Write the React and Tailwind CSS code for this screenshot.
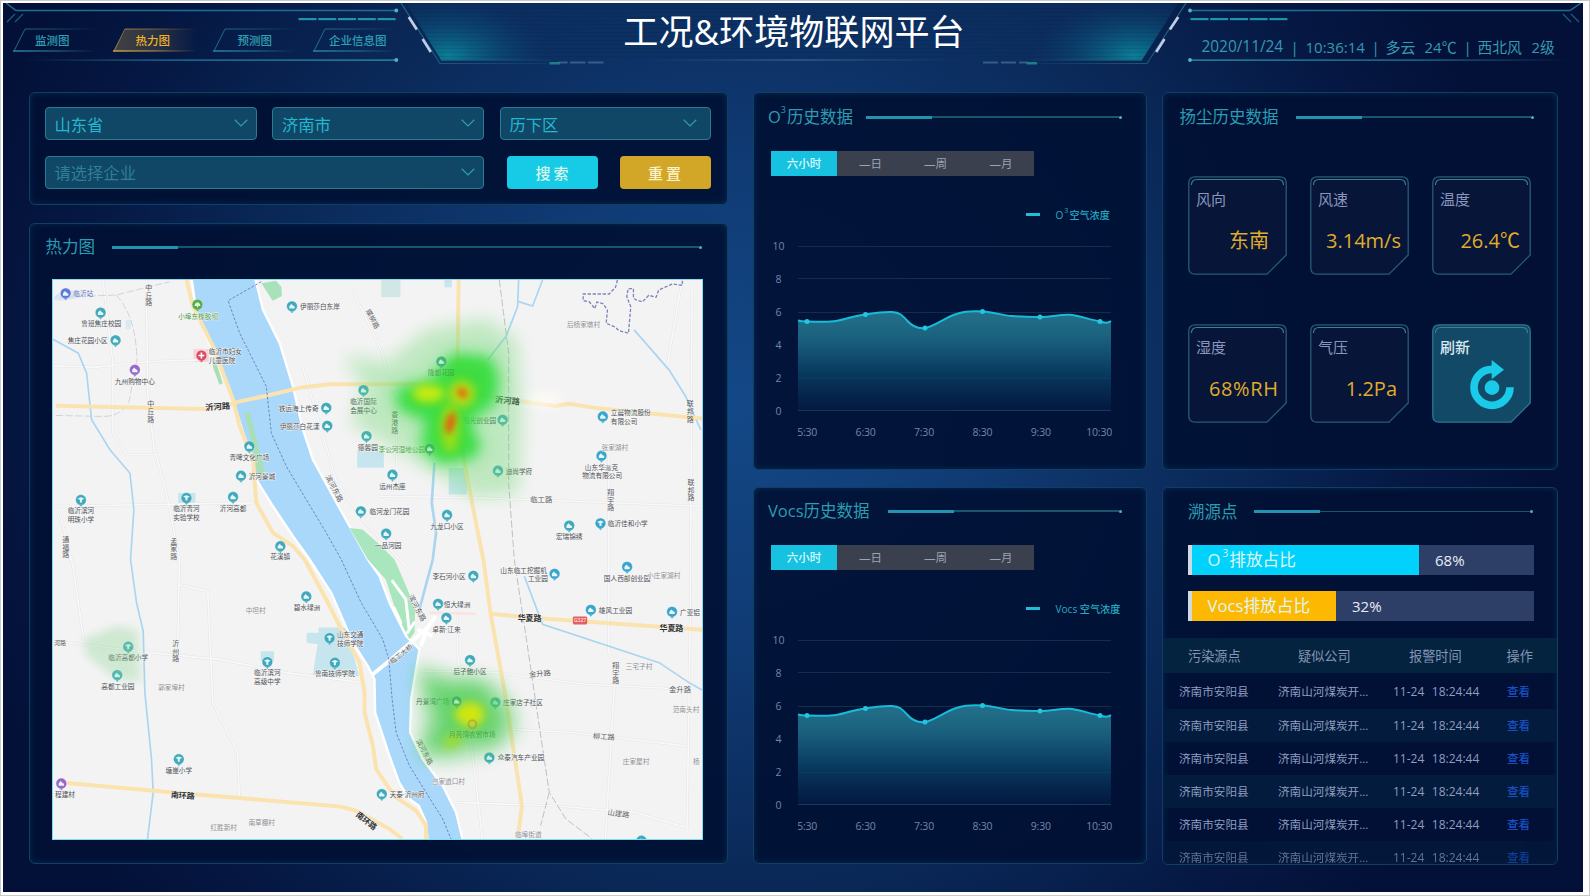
import React from "react";

/* ---------- header ---------- */

const LEFT_DASHES = [298.5, 318.3, 338, 357.8, 377.6];
const RIGHT_DASHES = [1190.5, 1210.2, 1230, 1249.7, 1269.4];

function HeaderFrame() {
  return (
    <svg className="absolute left-0 top-0 h-[89px] w-[1580px]" viewBox="3 3 1580 89" fill="none">
      <defs>
        <linearGradient id="fadeL" x1="0" x2="1">
          <stop offset="0" stopColor="#1d6f8f" stopOpacity="0" />
          <stop offset="0.4" stopColor="#1d6f8f" />
          <stop offset="1" stopColor="#2a8aa5" />
        </linearGradient>
        <linearGradient id="fadeR" x1="1" x2="0">
          <stop offset="0" stopColor="#1d6f8f" stopOpacity="0" />
          <stop offset="0.4" stopColor="#1d6f8f" />
          <stop offset="1" stopColor="#2a8aa5" />
        </linearGradient>
        <linearGradient id="midline" x1="0" x2="1">
          <stop offset="0" stopColor="#4d7ba0" stopOpacity="0" />
          <stop offset="0.5" stopColor="#5b8bb0" stopOpacity="0.7" />
          <stop offset="1" stopColor="#4d7ba0" stopOpacity="0" />
        </linearGradient>
        <linearGradient id="outL" x1="0" x2="1">
          <stop offset="0" stopColor="#1f6787" />
          <stop offset="1" stopColor="#1f6787" stopOpacity="0.15" />
        </linearGradient>
        <linearGradient id="outR" x1="1" x2="0">
          <stop offset="0" stopColor="#1f6787" />
          <stop offset="1" stopColor="#1f6787" stopOpacity="0.15" />
        </linearGradient>
        <radialGradient id="glowL" gradientUnits="userSpaceOnUse" cx="0" cy="0" r="1" gradientTransform="translate(448 56) scale(100 56)">
          <stop offset="0" stopColor="#0b7f97" />
          <stop offset="0.4" stopColor="#0b5f82" stopOpacity="0.7" />
          <stop offset="1" stopColor="#0b3f70" stopOpacity="0" />
        </radialGradient>
        <radialGradient id="glowR" gradientUnits="userSpaceOnUse" cx="0" cy="0" r="1" gradientTransform="translate(1134 56) scale(100 56)">
          <stop offset="0" stopColor="#0b7f97" />
          <stop offset="0.4" stopColor="#0b5f82" stopOpacity="0.7" />
          <stop offset="1" stopColor="#0b3f70" stopOpacity="0" />
        </radialGradient>
        <pattern id="scan" width="4" height="4" patternUnits="userSpaceOnUse">
          <rect width="4" height="1" fill="#04173f" opacity="0.13" />
        </pattern>
      </defs>

      <path d="M406 3 L441 60 H1142 L1178 3 Z" fill="#0d3263" opacity="0.55" />
      <path d="M406 3 L441 60 H1142 L1178 3 Z" fill="url(#glowL)" />
      <path d="M406 3 L441 60 H1142 L1178 3 Z" fill="url(#glowR)" />
      <path d="M406 3 L441 60 H1142 L1178 3 Z" fill="url(#scan)" />
      <rect x="441" y="59.5" width="110" height="1.2" fill="url(#outL)" />
      <rect x="1032" y="59.5" width="110" height="1.2" fill="url(#outR)" />
      <path d="M401 3 L440 63.5 H549" stroke="url(#outL)" strokeWidth="1.2" />
      <path d="M1186 3 L1147 63.5 H1037" stroke="url(#outR)" strokeWidth="1.2" />
      <rect x="640" y="59.5" width="320" height="1" fill="url(#midline)" />
      <g stroke="#3f6a8e" strokeOpacity="0.8" strokeWidth="2">
        <path d="M558 62.6H567.5M570 62.6H585.5M588 62.6H603.5" />
        <path d="M983 62.6H998M1001 62.6H1016M1019 62.6H1028" />
      </g>
      <path d="M549.5 63.2H560M1026.500 63.2H1037" stroke="#1f7f88" strokeWidth="2.500" />
      <g stroke="#c3cde6" strokeWidth="2.600">
        <path d="M408.700 17L416.800 29.500M422.600 39L430.800 52" />
        <path d="M1178.300 17L1169.900 29.500M1164.500 39L1156.200 52" />
      </g>

      <path d="M6 3 L16 10.500 H396" stroke="#1d6f8f" strokeWidth="1.500" />
      <circle cx="396.300" cy="10.500" r="1.900" fill="#4fb6c6" />
      <path d="M7 22L15 14M15 22L23 14" stroke="#1d5a7c" strokeWidth="1.300" />
      {LEFT_DASHES.map((x) => (
        <rect key={x} x={x} y="18" width="18" height="2.200" fill="#1f93ab" />
      ))}
      <rect x="25" y="59.400" width="371" height="1.400" fill="url(#fadeL)" />
      <circle cx="396.300" cy="60" r="1.900" fill="#4fb6c6" />

      <path d="M1581 3 L1570 10.500 H1190" stroke="#1d6f8f" strokeWidth="1.500" />
      <circle cx="1190" cy="10.500" r="1.900" fill="#4fb6c6" />
      <path d="M1563 14L1571 22M1571 14L1579 22" stroke="#1d5a7c" strokeWidth="1.300" />
      {RIGHT_DASHES.map((x) => (
        <rect key={x} x={x} y="18" width="18" height="2.200" fill="#1f93ab" />
      ))}
      <rect x="1190" y="59.400" width="378" height="1.400" fill="url(#fadeR)" />
      <circle cx="1190" cy="60" r="1.900" fill="#4fb6c6" />
    </svg>
  );
}

function NavTab({ id, label, active, pad }) {
  const c = active ? "#c9a24a" : "#2a86a2";
  return (
    <div className="relative h-[24px] w-[100px] shrink-0">
      <svg className="absolute left-0 top-0 h-[24px] w-[90px]" viewBox="0 0 90 24" fill="none">
        <defs>
          <linearGradient id={id} gradientUnits="userSpaceOnUse" x1="0" y1="0" x2="84" y2="0">
            <stop offset="0" stopColor={c} />
            <stop offset="0.5" stopColor={c} stopOpacity="0.6" />
            <stop offset="1" stopColor={c} stopOpacity="0" />
          </linearGradient>
        </defs>
        {active && <path d="M1 23 L13 1 H84 V23 Z" fill={`url(#${id})`} opacity="0.32" />}
        <path d="M84 1 H12 L1 23" stroke={`url(#${id})`} strokeWidth="1" opacity="0.8" />
        <path d="M0 23 H84" stroke={`url(#${id})`} strokeWidth="1.600" />
      </svg>
      <span
        className={`relative block whitespace-nowrap text-[11.5px] font-medium leading-[25px] ${pad} ${
          active ? "text-[#f0b429]" : "text-[#2fa0b4]"
        }`}
      >
        {label}
      </span>
    </div>
  );
}

function Header() {
  return (
    <header className="relative flex h-[89px] shrink-0 justify-between">
      <HeaderFrame />
      <nav className="relative flex w-[410px] pl-[10px] pt-[25px]">
        <NavTab id="nav1" label="监测图" pad="pl-[22px]" />
        <NavTab id="nav2" label="热力图" pad="pl-[22.500px]" active />
        <NavTab id="nav3" label="预测图" pad="pl-[24.500px]" />
        <NavTab id="nav4" label="企业信息图" pad="pl-[16px]" />
      </nav>
      <h1 className="relative whitespace-nowrap pl-[2px] pt-[2.500px] text-[35.100px] font-normal leading-[50px] text-white">工况&环境物联网平台</h1>
      <div className="relative flex w-[410px] items-start pl-[28.500px] pt-[34px] text-[15px] leading-[20px] text-[#3699b0]">
        <span className="w-[89px] whitespace-nowrap text-[15.400px]">2020/11/24</span>
        <span className="w-[15px]">|</span>
        <span className="w-[66px] whitespace-nowrap text-[15px]">10:36:14</span>
        <span className="w-[14px]">|</span>
        <span className="w-[39px] whitespace-nowrap">多云</span>
        <span className="w-[39px] whitespace-nowrap">24℃</span>
        <span className="w-[14px]">|</span>
        <span className="w-[54px] whitespace-nowrap text-[14.800px]">西北风</span>
        <span className="whitespace-nowrap text-[14.800px]">2级</span>
      </div>
    </header>
  );
}

/* ---------- shared pieces ---------- */

function Panel({ className = "", children }) {
  return (
    <section
      className={`overflow-hidden rounded-[6px] border-[1.5px] border-[#0f4064] bg-[#011034]/92 shadow-[inset_0_0_7px_rgba(12,70,110,0.45)] ${className}`}
    >
      {children}
    </section>
  );
}

function PanelTitle({ children, className = "", textClass = "" }) {
  return (
    <div className={`flex h-[24px] items-center ${className}`}>
      <h2 className={`shrink-0 whitespace-nowrap text-[16.500px] font-normal leading-[24px] text-[#2b9db2] ${textClass}`}>{children}</h2>
      <span className="h-[3px] w-[66px] shrink-0 bg-[#2294b0]" />
      <span className="h-[1.500px] flex-1 bg-[#17566f]" />
      <span className="size-[3px] rounded-full bg-[#53aec0]" />
    </div>
  );
}

function Select({ value, muted, className }) {
  return (
    <div className={`flex h-[33px] items-center justify-between rounded-[4px] border border-[#2b7b94] bg-[#114766] pl-[9px] pr-[8px] ${className}`}>
      <span className={`pt-[2px] text-[16.300px] leading-[30px] ${muted ? "text-[#2f7f95]" : "text-[#22b8ce]"}`}>{value}</span>
      <svg className="mt-[-1px] h-[8px] w-[14px]" viewBox="0 0 14 8" fill="none">
        <path d="M0.700 0.800 L7 7 L13.300 0.800" stroke="#2c9db5" strokeWidth="1.200" />
      </svg>
    </div>
  );
}

function FilterPanel() {
  return (
    <Panel className="flex h-[113.500px] flex-col gap-[15.500px] pl-[14.500px] pt-[14.500px]">
      <div className="flex">
        <Select value="山东省" className="w-[212px]" />
        <Select value="济南市" className="ml-[15.500px] w-[212px]" />
        <Select value="历下区" className="ml-[15.500px] w-[211px] pr-[13px]" />
      </div>
      <div className="flex">
        <Select value="请选择企业" muted className="w-[439.500px]" />
        <button className="ml-[23px] h-[33px] w-[91px] rounded-[4px] bg-[#17cbe7] pl-[2px] pt-[2px] text-[15px] font-medium tracking-[3px] text-[#d8f6ee]">搜索</button>
        <button className="ml-[21.500px] h-[33px] w-[91px] rounded-[4px] bg-[#d2a728] pl-[2px] pt-[2px] text-[15px] font-medium tracking-[3px] text-[#fbf3cc]">重置</button>
      </div>
    </Panel>
  );
}

/* ---------- map ---------- */

// Map canvas units: three per screen pixel, 1950 x 1680.
// Pin: [x, y, colour key, glyph]
const PINS = [
  [38, 40, "indigo", "h"], [143, 98, "teal", "h"], [188, 181, "teal", "h"], [246, 270, "violet", "h"],
  [434, 74, "green", "t"], [446, 227, "red", "+"], [718, 79, "teal", "h"], [821, 384, "teal", "h"],
  [824, 438, "teal", "h"], [933, 331, "teal", "h"], [942, 469, "teal", "h"], [590, 500, "teal", "h"],
  [565, 588, "teal", "h"], [541, 652, "teal", "h"], [401, 655, "teal", "s"], [84, 661, "teal", "s"],
  [683, 800, "teal", "h"], [925, 695, "teal", "h"], [1001, 762, "teal", "h"], [1020, 585, "teal", "h"],
  [1167, 245, "teal", "h"], [1351, 420, "teal", "h"], [1132, 507, "green2", "h"], [1337, 573, "teal", "h"],
  [1184, 706, "teal", "h"], [1652, 410, "blue", "h"], [1648, 528, "blue", "h"], [1551, 738, "teal", "h"],
  [1645, 731, "blue", "s"], [761, 951, "teal", "h"], [831, 1076, "teal", "s"], [847, 1150, "teal", "s"],
  [644, 1148, "teal", "s"], [226, 1102, "teal", "s"], [193, 1187, "teal", "h"], [378, 1440, "teal", "s"],
  [25, 1513, "violet", "h"], [988, 1545, "teal", "h"], [1263, 889, "teal", "h"], [1507, 883, "blue", "h"],
  [1725, 862, "blue", "h"], [1157, 973, "teal", "h"], [1182, 1015, "teal", "h"], [1616, 991, "blue", "h"],
  [1860, 997, "blue", "h"], [1253, 1142, "teal", "h"], [1213, 1266, "green2", "h"], [1329, 1269, "teal", "h"],
  [1311, 1435, "teal", "h"], [1768, 1685, "teal", "h"],
];

const PIN_COLORS = {
  teal: "#41a9bb", blue: "#3aa5cc", indigo: "#5f79d6", violet: "#9c66cc",
  green: "#55ad4a", red: "#d84a64", green2: "#3fa868",
};

// Label: [centre x, centre y, text, colour key, size, rotation]
const LABELS = [
  [91, 40, "临沂站", "i"], [145, 131, "鲁班焦庄校园"], [104, 182, "焦庄花园小区"], [246, 304, "九州购物中心"],
  [436, 109, "小埠东橡胶坝", "n"], [518, 216, "临沂市妇女"], [508, 242, "儿童医院"], [802, 81, "伊丽莎白东岸"],
  [738, 385, "铁运海上传奇"], [741, 440, "伊丽莎白花漾"], [933, 365, "临沂国际"], [933, 391, "会展中心"],
  [946, 504, "德馨园"], [1048, 509, "李公河湿地公园", "n"], [590, 534, "青啤文化广场"], [628, 590, "沂河景城"],
  [541, 686, "沂河高都"], [401, 687, "临沂青河"], [401, 714, "实验学校"], [84, 694, "临沂滨河"], [84, 721, "明珠小学"],
  [683, 832, "花溪镇"], [1011, 696, "临河龙门花园"], [1007, 797, "一品河园"], [1020, 620, "远州杰座"],
  [1282, 422, "阳光创业园"], [1400, 575, "迪尚学府"], [1184, 741, "九龙口小区"],
  [1736, 399, "立晨物流股份"], [1716, 424, "有限公司"], [1648, 564, "山东华派克"], [1650, 589, "物流有限公司"],
  [1551, 771, "宏瑞锦绣"], [1727, 732, "临沂佳和小学"], [763, 985, "碧水绿洲"], [893, 1066, "山东交通"],
  [893, 1092, "技师学院"], [847, 1184, "鲁南技师学院"], [644, 1181, "临沂滨河"], [644, 1207, "高级中学"],
  [226, 1136, "临沂高都小学"], [195, 1222, "高都工业园"], [378, 1473, "塘崖小学"], [36, 1547, "程建材"],
  [1064, 1547, "天泰·沂州府"], [1190, 891, "李石河小区"], [1414, 873, "山东临工挖掘机"], [1457, 898, "工业园"],
  [1725, 896, "国人西部创业园"], [1214, 974, "恒大绿洲"], [1182, 1050, "卓新·江来"], [1690, 992, "雄风工业园"],
  [1914, 999, "广亚铝"], [1253, 1176, "后子鲍小区"], [1141, 1267, "丹景湾广场"], [1412, 1270, "庄家店子社区"],
  [1406, 1436, "众泰汽车产业园"],
  [1594, 133, "后杨家墩村", "g"], [1688, 503, "张家湖村", "g"], [609, 993, "中坦村", "g"], [356, 1224, "郭家埠村", "g"],
  [513, 1645, "红胜新村", "g"], [627, 1631, "南草棚村", "g"], [1835, 888, "小庄家湖村", "g"], [1761, 1161, "三宅子村", "g"],
  [1902, 1291, "范南头村", "g"], [1752, 1447, "庄家屋村", "g"], [1188, 1508, "白家道口村", "g"], [1428, 1668, "临埠街道", "g"],
  [1933, 1448, "杨", "g"], [1467, 657, "临工路", "d", 22], [1463, 1182, "金升路", "d", 22, -5], [1884, 1230, "金升路", "d", 22],
  [1655, 1371, "柳工路", "d", 22, 4], [1699, 1603, "山建路", "d", 22, 8], [21, 1091, "河路", "d", 18],
  [495, 379, "沂河路", "b", 25, -4], [1366, 361, "沂河路", "b", 25, 6], [1432, 1013, "华夏路", "b", 24],
  [1858, 1044, "华夏路", "b", 24], [390, 1547, "南环路", "b", 24, 4], [943, 1624, "南环路", "b", 24, 38],
  [846, 626, "滨河东路", "d", 22, 62], [960, 117, "蝶柳路", "d", 21, 62], [1095, 985, "滨河东路", "d", 22, 62],
  [1046, 1124, "临工大桥", "d", 20, -38], [1116, 1418, "滨河东路", "d", 21, 62],
];

// Vertical road names: [x, top y, characters]
const VERTICAL = [
  [288, 22, "中丘路"], [294, 372, "中丘路"], [38, 780, "通福路"], [363, 784, "孟家路"], [369, 1092, "沂州路"],
  [1027, 405, "香港路"], [1676, 638, "翔宇路"], [1915, 372, "联邦路"], [1917, 608, "联邦路"], [1691, 1158, "翔宇路"],
];

const LABEL_COLORS = { k: "#4b4f55", i: "#5468b8", n: "#4c9a48", m: "#5c8f55", g: "#8d9094", d: "#5c5f63", b: "#303236" };

function Pin({ x, y, color, glyph }) {
  return (
    <g transform={`translate(${x} ${y})`}>
      <path d="M-8 11 L0 21 L8 11 Z" fill={PIN_COLORS[color]} />
      <circle r="16" fill={PIN_COLORS[color]} stroke="#ffffff" strokeOpacity="0.6" strokeWidth="1.500" />
      {glyph === "h" && <path d="M-8 7 V0 L-2 -7 L3 -2 L8 1 V7 Z" fill="#e4f8fb" />}
      {glyph === "s" && <path d="M-10 -4 L0 -8 L10 -4 L3 0 V8 H-3 V0 Z" fill="#e4f8fb" />}
      {glyph === "t" && <path d="M-9 4 Q-8 -5 0 -7 Q9 -4 9 4 Z M-1 3 H2 V9 H-1 Z" fill="#e6f7df" />}
      {glyph === "+" && <path d="M-2.500 -9 H2.500 V-2.500 H9 V2.500 H2.500 V9 H-2.500 V2.500 H-9 V-2.500 H-2.500 Z" fill="#fff" />}
    </g>
  );
}

const STREETS = [
  "M150 0L180 250V460L220 525H310L345 660L380 840L375 1090",
  "M280 0L285 340L305 520M0 258L130 262L290 245L440 240",
  "M0 680L600 670M20 700L60 860L92 1080M0 1085L290 1120L500 1140L700 1180L930 1210",
  "M376 915L465 935L480 1270L555 1420L560 1560M900 30L990 220L1030 400L1035 640",
  "M981 650L1290 655L1560 665L1950 680M1670 530V1120L1690 1160L1660 1680",
  "M1890 0L1845 260M1920 20L1915 1000L1905 1650M1100 1175L1330 1180L1600 1215L1900 1230",
  "M1180 1340L1560 1360L1900 1400M1205 1570L1500 1580L1750 1600L1900 1645M1215 990V1120L1270 1500L1290 1680",
  "M750 260L850 600L930 720L1060 860",
];

function CityMap() {
  return (
    <svg className="block h-full w-full" viewBox="0 0 1950 1680" preserveAspectRatio="none">
      <defs>
        <filter id="b50" x="-50%" y="-50%" width="200%" height="200%"><feGaussianBlur stdDeviation="27" /></filter>
        <filter id="b25" x="-50%" y="-50%" width="200%" height="200%"><feGaussianBlur stdDeviation="22" /></filter>
        <filter id="b12" x="-60%" y="-60%" width="220%" height="220%"><feGaussianBlur stdDeviation="15" /></filter>
        <filter id="b6" x="-80%" y="-80%" width="260%" height="260%"><feGaussianBlur stdDeviation="9" /></filter>
      </defs>
      <rect width="1950" height="1680" fill="#f4f3f4" />

      {/* plots and parks */}
      <g fill="#c6e5ee">
        <rect x="914" y="512" width="80" height="52" />
        <rect x="986" y="0" width="58" height="52" fill="#d3e6e6" />
        <rect x="1176" y="0" width="22" height="22" />
        <rect x="1189" y="565" width="55" height="80" />
        <path d="M762 1060H798V1044H880L920 1190H780L795 1095L762 1090Z" />
        <rect x="624" y="1116" width="40" height="30" />
        <rect x="376" y="640" width="52" height="42" />
        <rect x="218" y="120" width="16" height="28" opacity="0.600" />
        <path d="M0 58L10 44L50 30L80 40L95 52L20 62Z" fill="#dbe3f4" />
      </g>
      <path d="M626 10L670 2L686 20L688 48L660 62Z" fill="#a8e2ba" />
      <rect x="422" y="208" width="46" height="38" fill="#f7d3d5" />

      {/* minor streets */}
      <g fill="none" stroke="#e5e4e6" strokeWidth="8">
        {STREETS.map((d) => <path key={d} d={d} />)}
      </g>
      <g fill="none" stroke="#f9f9f9" strokeWidth="5">
        {STREETS.map((d) => <path key={d} d={d} />)}
      </g>
      <g fill="none" stroke="#d2d2d5" strokeWidth="3" strokeDasharray="22 7">
        <path d="M20 52L190 45L350 5M190 45Q250 110 252 240Q240 300 230 360Q210 410 150 410L0 407" />
        <path d="M1341 0L1369 220V610L1386 840L1421 1070L1461 1340L1491 1540L1541 1620L1621 1680M1491 1540L1465 1640" stroke="#bfc0c3" />
      </g>

      {/* river */}
      <path
        d="M416 -10L431 100L470 190L516 300L546 380L575 470L611 600L661 680L721 770L771 840L836 940L901 1090L946 1160L966 1200L968 1300L1011 1430L1040 1510L1071 1560L1099 1580L1121 1630L1126 1690H1233L1211 1600L1171 1520L1111 1440L1073 1360L1076 1260L1091 1170L1101 1110L1061 1070L1011 970L981 890L946 840L891 740L841 650L781 540L751 450L721 320L681 190L631 90L606 -10Z"
        fill="#a9d8fb" stroke="#ffffff" strokeWidth="7"
      />
      <path d="M891 745L930 750L981 795L1026 840L1061 920L1088 990L1086 1060L1071 1080L1035 1010L1000 900L946 840Z" fill="#a9e6bd" />
      <path d="M575 400L600 500L616 600L640 590L612 480L590 395ZM485 230L510 310L500 315L480 260Z" fill="#a9dfb4" />
      <path d="M1020 905L1060 960L1070 1050M1025 985L1045 1030M1085 1030L1065 1060" stroke="#fff" strokeWidth="9" strokeLinecap="round" fill="none" />
      <path d="M961 1185L1010 1145L1080 1085L1125 1045L1150 1010" stroke="#ffffff" strokeWidth="12" fill="none" />
      <path d="M1125 1045L1105 1100M1095 1050L1140 1070" stroke="#ffffff" strokeWidth="12" fill="none" />

      {/* streams */}
      <g fill="none" stroke="#a9d5f0" strokeWidth="5">
        <path d="M0 178L76 220L101 280L116 420L171 510L231 580L243 690L233 840L251 970L271 1055L276 1240L296 1440L301 1540L284 1680" />
        <path d="M1399 0L1396 80L1361 170L1306 240M1471 0L1441 78L1399 65" />
        <path d="M1146 550L1138 670L1151 760L1141 840L1101 990" strokeWidth="8" />
        <path d="M1746 150L1851 270L1901 350L1946 450" />
        <path d="M1416 890L1471 1035L1821 1150L1911 1210L1950 1232" />
      </g>

      {/* main roads */}
      <g fill="none" stroke="#fbe3b0" strokeWidth="12" strokeLinejoin="round">
        <path d="M9 378L451 388L520 380L551 367L641 348L751 322L831 313H1090L1340 355L1411 365L1511 378L1551 372L1631 385L1761 398L1950 416" />
        <path d="M401 0L421 80L481 200L541 360L561 440L601 540L611 670L661 760L721 800L756 840L821 960L861 1040L921 1150L936 1240V1300L961 1400L971 1470L1011 1530L1031 1555L1091 1595L1121 1640V1680" />
        <path d="M1219 0L1216 210L1222 420L1236 550L1271 730L1293 840L1316 1010L1356 1230L1391 1460L1409 1580L1396 1680" />
        <path d="M1311 1003L1481 1018L1950 1051" />
        <path d="M41 1512L361 1540L861 1582L911 1595L1011 1650L1050 1680" />
      </g>
      <path d="M1131 1000L1270 1003" stroke="#f8e3e1" strokeWidth="8" />
      <g fill="none" stroke="#6c86c4" strokeWidth="3" strokeDasharray="8 5">
        <path d="M626 5L526 62L561 160L601 240L641 320L656 460L701 560L761 660L821 760L866 840L926 970L991 1080L1009 1140L1019 1260L1031 1360L1071 1460L1121 1540L1171 1620L1196 1680" />
      </g>
      <path
        d="M1696 0L1690 22L1671 42H1593V62L1612 66L1628 86L1634 66L1654 72L1666 92L1662 130L1690 142L1700 152L1729 160L1736 80L1724 50L1728 26H1744V54L1752 60L1771 66L1790 46L1812 52L1820 30L1861 12L1891 16V0"
        fill="none" stroke="#7d86b8" strokeWidth="4" strokeDasharray="10 5"
      />
      <ellipse cx="1470" cy="360" rx="60" ry="20" fill="#fdfcf6" opacity="0.850" filter="url(#b12)" />

      {PINS.map(([x, y, c, g]) => <Pin key={`${x}-${y}`} x={x} y={y} color={c} glyph={g} />)}
      <rect x="1562" y="1011" width="43" height="24" rx="4" fill="#e5605f" />
      <text x="1583.500" y="1023" fontSize="15" fill="#fff" textAnchor="middle" dominantBaseline="central">G327</text>
      {LABELS.map(([x, y, t, c = "k", s = 20, r = 0]) => (
        <text
          key={`${x}-${y}`} x={x} y={y} fontSize={s} fill={LABEL_COLORS[c]} textAnchor="middle" dominantBaseline="central"
          fontWeight={c === "b" ? 600 : 400} transform={r ? `rotate(${r} ${x} ${y})` : undefined}
          stroke="#f7f7f7" strokeWidth="2.500" paintOrder="stroke"
        >
          {t}
        </text>
      ))}
      {VERTICAL.map(([x, y, t]) => (
        <text key={`${x}-${y}`} fontSize="21" fill="#5c5f63" textAnchor="middle">
          {t.split("").map((ch, i) => <tspan key={i} x={x} y={y + 8 + i * 23}>{ch}</tspan>)}
        </text>
      ))}

      {/* heat overlay */}
      <g>
        <path d="M870 225L1000 250L1120 150L1300 115L1395 180L1410 400L1400 640L1270 655L1150 580L980 480L890 425L940 330Z" fill="#6fd873" opacity="0.400" filter="url(#b50)" />
        <path d="M1025 325L1130 300L1200 220L1315 230L1345 300L1325 380L1250 425L1290 500L1260 540L1160 552L1100 500L1120 425L1035 390Z" fill="#2fdd3c" opacity="0.900" filter="url(#b25)" />
        <path d="M1200 235L1300 240L1315 330L1260 380L1240 420L1265 510L1170 540L1140 500L1150 400L1060 380L1060 340L1160 320Z" fill="#3fdc3a" opacity="0.500" filter="url(#b12)" />
        <ellipse cx="1128" cy="341" rx="48" ry="27" fill="#c8ea08" filter="url(#b12)" />
        <ellipse cx="1228" cy="342" rx="40" ry="40" fill="#b4dc14" filter="url(#b12)" />
        <ellipse cx="1193" cy="445" rx="28" ry="75" fill="#9ade16" filter="url(#b12)" />
        <ellipse cx="1230" cy="339" rx="18" ry="12" fill="#e8600c" filter="url(#b6)" transform="rotate(40 1230 339)" />
        <ellipse cx="1194" cy="430" rx="13" ry="34" fill="#e25c10" filter="url(#b6)" transform="rotate(14 1194 430)" />

        <path d="M1090 1150L1180 1180L1330 1200L1390 1280L1400 1360L1330 1420L1200 1450L1100 1440L1110 1330Z" fill="#5fcf68" opacity="0.460" filter="url(#b50)" />
        <path d="M1110 1180L1180 1220L1280 1210L1360 1310L1330 1390L1230 1390L1140 1420L1110 1390L1160 1330Z" fill="#3fcc48" opacity="0.680" filter="url(#b50)" />
        <ellipse cx="1253" cy="1305" rx="44" ry="36" fill="#d2e60f" filter="url(#b12)" />
        <ellipse cx="1202" cy="1385" rx="30" ry="20" fill="#a6dc1c" opacity="0.800" filter="url(#b12)" transform="rotate(-35 1202 1385)" />
        <path d="M90 1080L190 1040L255 1050L262 1210L190 1200L100 1130Z" fill="#8ed695" opacity="0.360" filter="url(#b12)" />
      </g>
      <g opacity="0.550">
        <Pin x={1167} y={245} color="green2" glyph="h" />
        <Pin x={1132} y={507} color="green2" glyph="h" />
        <Pin x={1213} y={1266} color="green2" glyph="h" />
        <circle cx="1260" cy="1335" r="12" fill="none" stroke="#c9782f" strokeWidth="5" />
      </g>
      <g fill="#3f8f3a" fontSize="20" textAnchor="middle" dominantBaseline="central" opacity="0.700">
        <text x="1167" y="279">隆都花园</text>
        <text x="1260" y="1367">月亮湾农贸市场</text>
      </g>
    </svg>
  );
}

function MapPanel() {
  return (
    <Panel className="h-[641px] pl-[22px] pt-[11px]">
      <PanelTitle className="ml-[-6.500px] w-[656px]" textClass="w-[66px]">热力图</PanelTitle>
      <div className="mt-[20px] h-[561px] w-[651px] border-[1.500px] border-[#7be0ee]">
        <CityMap />
      </div>
    </Panel>
  );
}

/* ---------- history charts ---------- */

const CURVE =
  "M0 74.500 C3 75.500 6 75.500 9 75.500 C20 75.500 30 76.500 38 75 C48 73.500 56 69.500 67.500 68.500 C77 67 86 65.500 94 66 C102 66.500 104 69 109 74.500 C113 79 119 83 127 82 C138 80 148 70.500 160 67.500 C168 65 176 65 184.500 65.500 C196 66 204 69.500 214 70 C224 71 234 71 242 71 C254 71 262 68.500 271 68.800 C281 69 290 73.500 302 75.500 C306 77 310 77.500 313 75";
const POINTS = [[9, 75.500], [67.500, 68.500], [127, 82], [184.500, 65.500], [242, 71], [302, 75.500]];
const GRID_Y = [0.500, 32.500, 66.500, 99, 132, 164.500];
const Y_TICKS = ["10", "8", "6", "4", "2", "0"];
const X_TICKS = ["5:30", "6:30", "7:30", "8:30", "9:30", "10:30"];

function AreaChart({ id }) {
  return (
    <div className="ml-[5.500px]">
      <div className="flex">
        <div className="flex h-[165px] w-[33px] flex-col justify-between">
          {Y_TICKS.map((t) => (
            <span key={t} className="-my-[7px] h-[14px] w-[27px] pt-[0.500px] text-center text-[10.500px] leading-[14px] text-[#7585a8]">{t}</span>
          ))}
        </div>
        <svg className="h-[165px] w-[313px] overflow-visible" viewBox="0 0 313 165" fill="none">
          <defs>
            <linearGradient id={id} x1="0" y1="0" x2="0" y2="1">
              <stop offset="0" stopColor="#23708a" />
              <stop offset="0.250" stopColor="#1b627f" />
              <stop offset="0.600" stopColor="#093c61" />
              <stop offset="1" stopColor="#031a42" stopOpacity="0.800" />
            </linearGradient>
          </defs>
          {GRID_Y.map((y) => <path key={y} d={`M0 ${y}H313`} stroke="#152c4b" strokeWidth="1" />)}
          <path d={`${CURVE} V165 H0 Z`} fill={`url(#${id})`} />
          <path d="M0 132.500H313" stroke="#123f60" strokeWidth="1" opacity="0.500" />
          <path d="M0 164.500H313" stroke="#17385a" strokeWidth="1" />
          <path d={CURVE} stroke="#16bcd8" strokeWidth="2" />
          {POINTS.map(([x, y]) => <circle key={x} cx={x} cy={y} r="2.500" fill="#22c6e2" />)}
        </svg>
      </div>
      <div className="ml-[13px] mt-[14px] flex">
        {X_TICKS.map((t) => (
          <span key={t} className="w-[58.400px] text-center text-[10.500px] leading-[14px] tracking-[-0.200px] text-[#7585a8]">{t}</span>
        ))}
      </div>
    </div>
  );
}

function Sup3({ className = "" }) {
  return <sup className={`relative font-normal leading-none ${className}`}>3</sup>;
}

function HistoryPanel({ title, titleClass, legend, id, className, padTop }) {
  return (
    <Panel className={`pl-[6px] ${padTop} ${className}`}>
      <PanelTitle className="ml-[8.500px] w-[353.500px]" textClass={titleClass}>{title}</PanelTitle>
      <div className="ml-[11.500px] mt-[21.500px] flex h-[25px] w-[263px] bg-[#3a404d] text-[11.500px] leading-[25px]">
        <span className="w-[66px] bg-[#17c2e0] text-center font-medium text-[#dcfbff]">六小时</span>
        <span className="w-[66px] pl-[1px] text-center text-[#9ba3b5]">—日</span>
        <span className="w-[65px] text-center text-[#9ba3b5]">—周</span>
        <span className="w-[66px] text-center text-[#9ba3b5]">—月</span>
      </div>
      <div className="ml-[266.500px] mt-[31px] flex h-[16px] items-center">
        <span className="h-[2.500px] w-[13.500px] bg-[#1fbdd8]" />
        <span className="ml-[16px] whitespace-nowrap text-[10.100px] font-medium leading-[16px] text-[#24abc2]">{legend}</span>
      </div>
      <div className="mt-[23px]">
        <AreaChart id={id} />
      </div>
    </Panel>
  );
}

/* ---------- dust panel ---------- */

function CardFrame({ filled }) {
  return (
    <svg className="absolute left-0 top-0 h-[99px] w-[99px]" viewBox="0 0 99 99" fill="none">
      <path
        d="M7 0.800 H92 Q98.200 0.800 98.200 7 V79 L79 98.200 H7 Q0.800 98.200 0.800 92 V7 Q0.800 0.800 7 0.800 Z"
        fill={filled ? "#124966" : "#061538"} stroke={filled ? "#2c7790" : "#285b77"} strokeWidth="1.300"
      />
      <path d="M3.500 9 Q3.500 3.500 9 3.500 H90 Q95.500 3.500 95.500 9" stroke="#3c7f98" strokeWidth="1.200" />
    </svg>
  );
}

function StatCard({ label, value, pad }) {
  return (
    <div className="relative h-[99px] w-[99px]">
      <CardFrame />
      <div className="relative flex h-full flex-col">
        <span className="pl-[8px] pt-[13px] text-[15px] leading-[21px] text-[#8b95bd]">{label}</span>
        <span className={`mt-[17px] whitespace-nowrap text-right text-[20px] leading-[28px] text-[#e0ac2b] ${pad}`}>{value}</span>
      </div>
    </div>
  );
}

function RefreshCard() {
  return (
    <div className="relative h-[99px] w-[99px]">
      <CardFrame filled />
      <div className="relative flex h-full flex-col">
        <span className="pl-[8px] pt-[13px] text-[15px] font-medium leading-[21px] text-[#dbe8f2]">刷新</span>
        <svg className="ml-[37px] mt-[2px] h-[50px] w-[46px]" viewBox="0 0 138 150" fill="none">
          <path d="M123 82 A54 54 0 1 1 69 28" stroke="#19cbe8" strokeWidth="23" />
          <path d="M68 0 L105 29 L68 58 Z" fill="#19cbe8" />
          <circle cx="69" cy="83" r="22" fill="#19cbe8" />
        </svg>
      </div>
    </div>
  );
}

function DustPanel() {
  return (
    <Panel className="h-[378.500px] pt-[12.500px]">
      <PanelTitle className="ml-[16.500px] w-[354px]" textClass="w-[116px]">扬尘历史数据</PanelTitle>
      <div className="ml-[25px] mt-[46.500px] grid w-[343px] grid-cols-3 gap-x-[23px] gap-y-[49px]">
        <StatCard label="风向" value="东南" pad="pr-[18px]" />
        <StatCard label="风速" value="3.14m/s" pad="pr-[8px]" />
        <StatCard label="温度" value="26.4℃" pad="pr-[11px]" />
        <StatCard label="湿度" value="68%RH" pad="pr-[8.500px] tracking-[0.600px]" />
        <StatCard label="气压" value="1.2Pa" pad="pr-[12px]" />
        <RefreshCard />
      </div>
    </Panel>
  );
}

/* ---------- source panel ---------- */

const ROWS = ["bg-transparent", "bg-[#031b3c]", "bg-transparent", "bg-[#031b3c]", "bg-transparent", "bg-[#031b3c]"];

function Progress({ children, pct, fill, width }) {
  return (
    <div className="flex h-[30px] w-[346px] bg-[#2e3f67]">
      <span className="w-[4px] bg-[#cfdae2]" />
      <span className={`whitespace-nowrap pl-[15.500px] text-[16.700px] leading-[30px] text-[#dff6f4] ${fill} ${width}`}>{children}</span>
      <span className="pl-[16px] text-[15px] leading-[31px] text-[#e6ebf5]">{pct}</span>
    </div>
  );
}

function SourcePanel() {
  return (
    <Panel className="flex h-[378px] flex-col pt-[11.500px]">
      <PanelTitle className="ml-[25px] w-[345px] shrink-0" textClass="w-[65.500px]">溯源点</PanelTitle>
      <div className="ml-[25px] mt-[21.500px] flex flex-col gap-[16px]">
        <Progress pct="68%" fill="bg-[#00d2fc]" width="w-[227px]">
          O<Sup3 className="top-[-9px] ml-[2px] mr-[1px] text-[10px]" />排放占比
        </Progress>
        <Progress pct="32%" fill="bg-[#fdb902]" width="w-[144px]">Vocs排放占比</Progress>
      </div>
      <div className="mt-[17px] flex h-[35px] shrink-0 items-center bg-[#03233f] text-[13.200px] leading-[20px] text-[#8394b5]">
        <span className="ml-[25px] w-[110px]">污染源点</span>
        <span className="w-[111px]">疑似公司</span>
        <span className="w-[97.500px]">报警时间</span>
        <span>操作</span>
      </div>
      <div className="flex flex-col">
        {ROWS.map((bg, i) => (
          <div key={i} className={`flex shrink-0 items-center whitespace-nowrap pt-[1px] text-[11.600px] leading-[16px] text-[#8f9cc0] ${i === 0 ? "h-[36px]" : "h-[33px]"} ${i === 5 ? "opacity-70" : ""} ${bg}`}>
            <span className="ml-[16px] w-[99px]">济南市安阳县</span>
            <span className="w-[115px]">济南山河煤炭开...</span>
            <span className="w-[114px] text-[12px]">
              11-24<span className="ml-[7.500px]">18:24:44</span>
            </span>
            <span className="font-medium text-[#1a4fc4]">查看</span>
          </div>
        ))}
      </div>
    </Panel>
  );
}

export default function App() {
  return (
    <div className="h-[896px] w-[1590px] overflow-hidden border border-[#c9cace] bg-white pb-[3px] pl-[2px] pr-[6px] pt-[2px] font-['Open_Sans','Noto_Sans_CJK_SC',sans-serif]">
      <div className="flex h-[889px] w-[1580px] flex-col overflow-hidden bg-[radial-gradient(ellipse_800px_780px_at_735px_400px,#134886_0%,#103b75_30%,#0a2857_62%,#051742_86%,#031138_100%)]">
        <Header />
        <main className="flex pl-[26px]">
          <div className="-mt-[0.500px] flex w-[698.500px] flex-col gap-[18px]">
            <FilterPanel />
            <MapPanel />
          </div>
          <div className="-mt-[0.500px] ml-[25px] flex w-[394px] flex-col gap-[17px]">
            <HistoryPanel
              id="areaO3" className="h-[378.500px]" padTop="pt-[12.500px]" titleClass="w-[98px]"
              title={<>O<Sup3 className="top-[-10px] mr-[1px] text-[9px]" />历史数据</>}
              legend={<>O<Sup3 className="top-[-6px] ml-[1px] mr-[1px] text-[7px]" />空气浓度</>}
            />
            <HistoryPanel
              id="areaVocs" className="h-[377px]" padTop="pt-[11px]" titleClass="w-[120px]"
              title="Vocs历史数据" legend="Vocs 空气浓度"
            />
          </div>
          <div className="-mt-[0.500px] ml-[15.500px] flex w-[396px] flex-col gap-[17px]">
            <DustPanel />
            <SourcePanel />
          </div>
        </main>
      </div>
    </div>
  );
}
